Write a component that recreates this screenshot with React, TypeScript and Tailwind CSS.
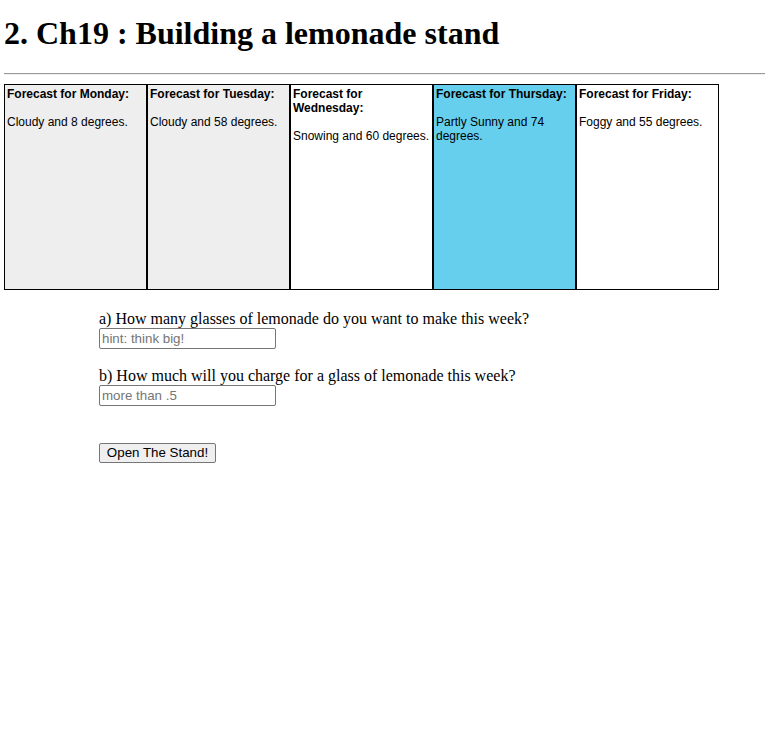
import React from "react";

const days = [
  { title: "Forecast for Monday:", text: "Cloudy and 8 degrees.", bg: "bg-[#eeeeee]" },
  { title: "Forecast for Tuesday:", text: "Cloudy and 58 degrees.", bg: "bg-[#eeeeee]" },
  { title: "Forecast for Wednesday:", text: "Snowing and 60 degrees.", bg: "bg-white" },
  { title: "Forecast for Thursday:", text: "Partly Sunny and 74 degrees.", bg: "bg-[#66cfed]" },
  { title: "Forecast for Friday:", text: "Foggy and 55 degrees.", bg: "bg-white" },
];

export default function App() {
  return (
    <div className="min-h-[753px] bg-white pl-[4px] text-black" style={{ fontFamily: '"Liberation Serif", "Times New Roman", serif' }}>
      <h1 className="pt-[15px] text-[32px] font-bold leading-[36px]">2. Ch19 : Building a lemonade stand</h1>
      <div className="mt-[22px] h-[2px] border-t border-b border-t-[#9a9a9a] border-b-[#eeeeee]" />
      <div className="mt-[9px] flex">
        {days.map((d) => (
          <div
            key={d.title}
            className={`h-[206px] w-[143px] border border-black pl-[2px] pr-[1px] pt-[2px] text-[12px] leading-[14px] ${d.bg}`}
            style={{ fontFamily: '"Liberation Sans", Arial, sans-serif' }}
          >
            <div className="font-bold">{d.title}</div>
            <div className="mt-[14px]">{d.text}</div>
          </div>
        ))}
      </div>
      <div className="ml-[95px] mt-[20px] text-[16px] leading-[18px]">
        <div>a) How many glasses of lemonade do you want to make this week?</div>
        <input
          type="text"
          placeholder="hint: think big!"
          className="block h-[21px] w-[177px] rounded-[2px] border border-[#767676] px-[2px] text-[13.33px] placeholder:text-[#757575] outline-none"
          style={{ fontFamily: '"Liberation Sans", Arial, sans-serif' }}
        />
        <div className="mt-[18px]">b) How much will you charge for a glass of lemonade this week?</div>
        <input
          type="text"
          placeholder="more than .5"
          className="block h-[21px] w-[177px] rounded-[2px] border border-[#767676] px-[2px] text-[13.33px] placeholder:text-[#757575] outline-none"
          style={{ fontFamily: '"Liberation Sans", Arial, sans-serif' }}
        />
        <button
          className="mt-[37px] block h-[20px] w-[117px] rounded-[2px] border border-[#767676] bg-[#efefef] text-[13.33px] leading-[16px] text-black"
          style={{ fontFamily: '"Liberation Sans", Arial, sans-serif' }}
        >
          Open The Stand!
        </button>
      </div>
    </div>
  );
}
